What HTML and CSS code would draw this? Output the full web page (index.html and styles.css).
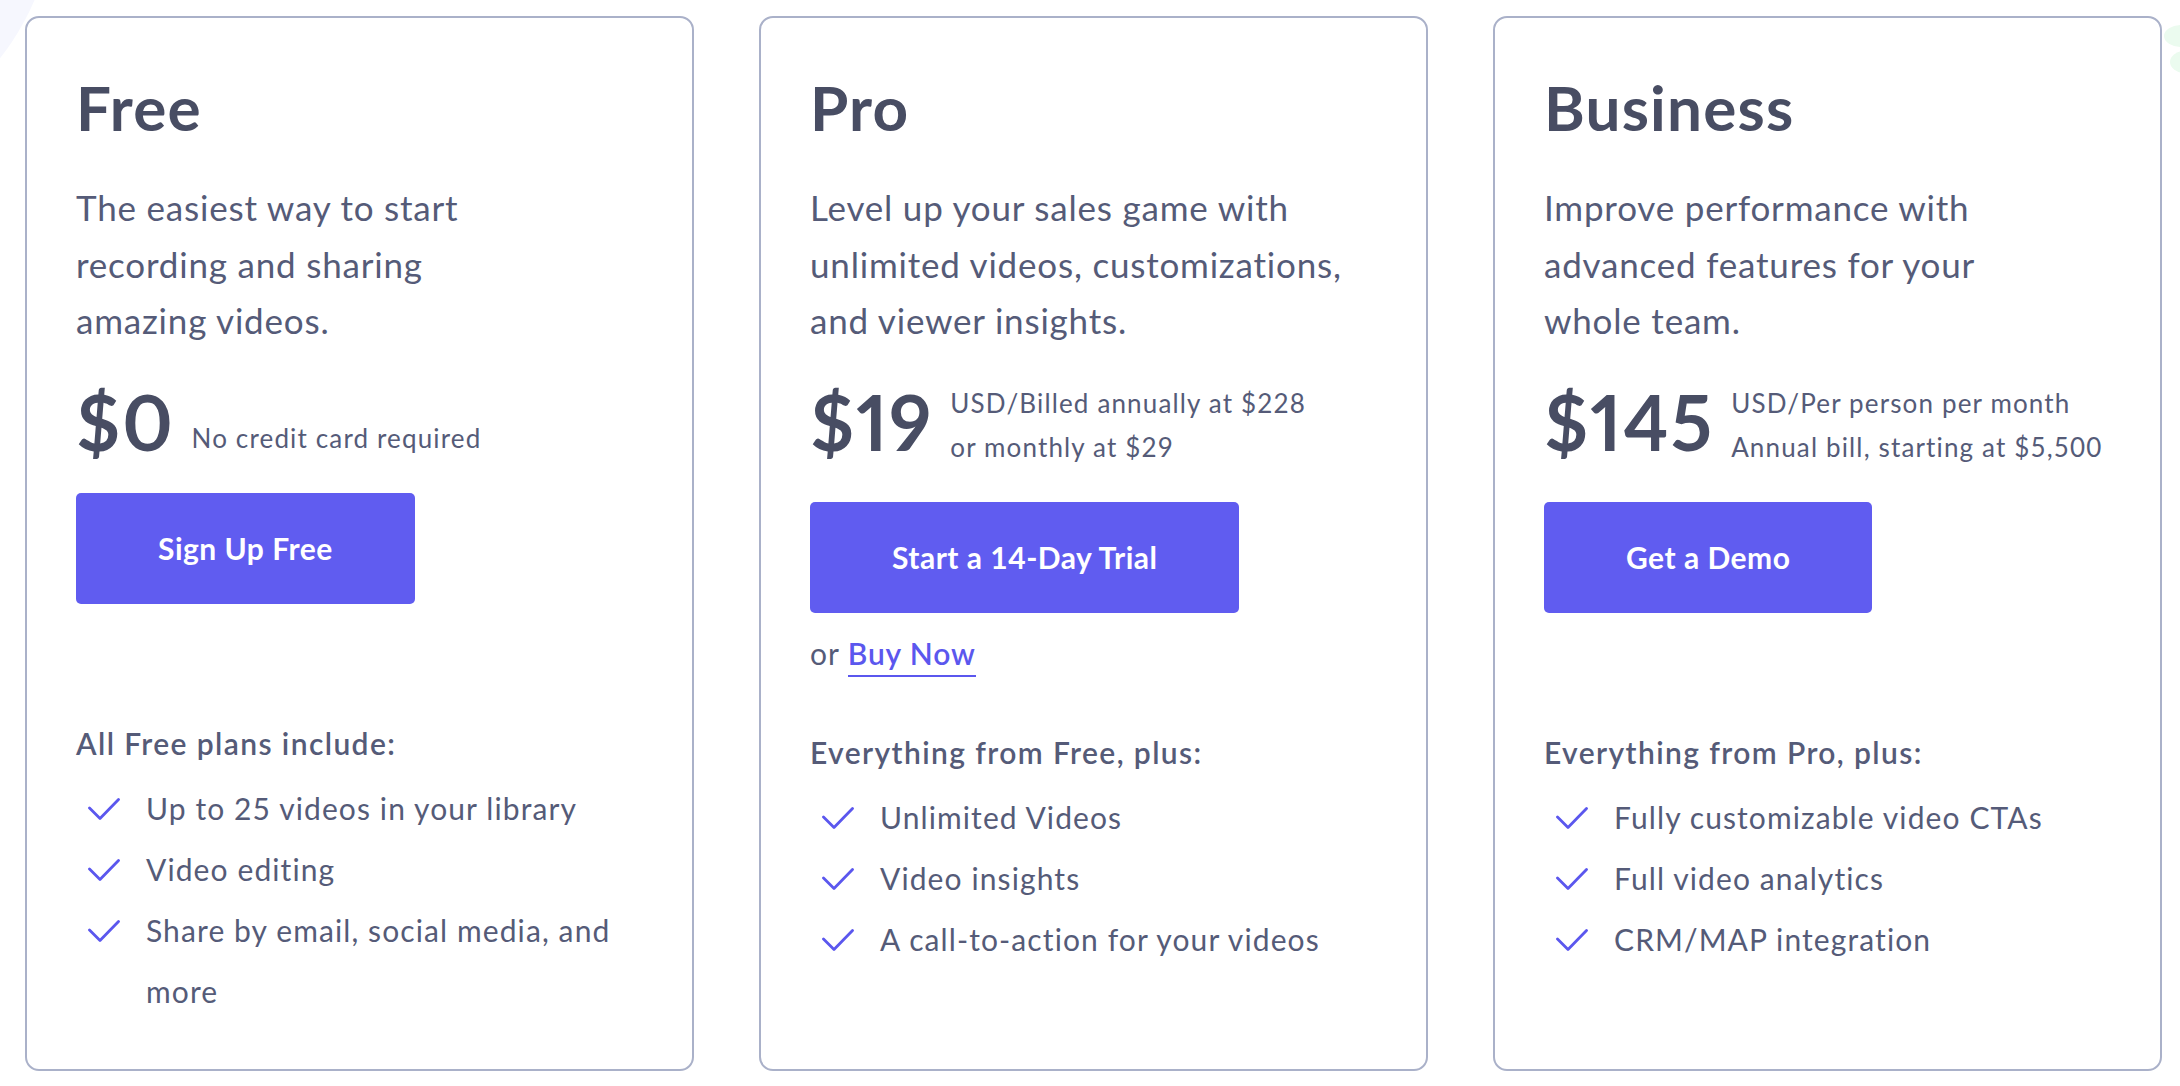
FILE: index.html
```html
<!DOCTYPE html>
<html lang="en">
<head>
<meta charset="utf-8">
<title>Pricing</title>
<link rel="stylesheet" href="styles.css">
</head>
<body>
<div class="deco deco--lavender"></div>
<div class="deco deco--mint-a"></div>
<div class="deco deco--mint-b"></div>
<main class="plans">
  <section class="plan">
    <h2 class="plan__name">Free</h2>
    <p class="plan__desc">The easiest way to start<br>recording and sharing<br>amazing videos.</p>
    <div class="plan__price">
      <span class="plan__amount">$0</span>
      <span class="plan__note plan__note--single">No credit card required</span>
    </div>
    <a class="plan__cta" href="#">Sign Up Free</a>
    <div class="plan__alt"></div>
    <h3 class="plan__includes">All Free plans include:</h3>
    <ul class="plan__features">
      <li class="feature"><svg class="feature__check" viewBox="0 0 32 22"><polyline points="1.5,10 12,20.5 30.5,1.5"/></svg><span class="feature__text">Up to 25 videos in your library</span></li>
      <li class="feature"><svg class="feature__check" viewBox="0 0 32 22"><polyline points="1.5,10 12,20.5 30.5,1.5"/></svg><span class="feature__text">Video editing</span></li>
      <li class="feature"><svg class="feature__check" viewBox="0 0 32 22"><polyline points="1.5,10 12,20.5 30.5,1.5"/></svg><span class="feature__text">Share by email, social media, and more</span></li>
    </ul>
  </section>

  <section class="plan">
    <h2 class="plan__name">Pro</h2>
    <p class="plan__desc">Level up your sales game with<br>unlimited videos, customizations,<br>and viewer insights.</p>
    <div class="plan__price">
      <span class="plan__amount">$19</span>
      <span class="plan__note">USD/Billed annually at $228<br>or monthly at $29</span>
    </div>
    <a class="plan__cta" href="#">Start a 14-Day Trial</a>
    <p class="plan__alt">or <a class="plan__link" href="#">Buy Now</a></p>
    <h3 class="plan__includes">Everything from Free, plus:</h3>
    <ul class="plan__features">
      <li class="feature"><svg class="feature__check" viewBox="0 0 32 22"><polyline points="1.5,10 12,20.5 30.5,1.5"/></svg><span class="feature__text">Unlimited Videos</span></li>
      <li class="feature"><svg class="feature__check" viewBox="0 0 32 22"><polyline points="1.5,10 12,20.5 30.5,1.5"/></svg><span class="feature__text">Video insights</span></li>
      <li class="feature"><svg class="feature__check" viewBox="0 0 32 22"><polyline points="1.5,10 12,20.5 30.5,1.5"/></svg><span class="feature__text">A call-to-action for your videos</span></li>
    </ul>
  </section>

  <section class="plan">
    <h2 class="plan__name">Business</h2>
    <p class="plan__desc">Improve performance with<br>advanced features for your<br>whole team.</p>
    <div class="plan__price">
      <span class="plan__amount">$145</span>
      <span class="plan__note">USD/Per person per month<br>Annual bill, starting at $5,500</span>
    </div>
    <a class="plan__cta" href="#">Get a Demo</a>
    <div class="plan__alt"></div>
    <h3 class="plan__includes">Everything from Pro, plus:</h3>
    <ul class="plan__features">
      <li class="feature"><svg class="feature__check" viewBox="0 0 32 22"><polyline points="1.5,10 12,20.5 30.5,1.5"/></svg><span class="feature__text">Fully customizable video CTAs</span></li>
      <li class="feature"><svg class="feature__check" viewBox="0 0 32 22"><polyline points="1.5,10 12,20.5 30.5,1.5"/></svg><span class="feature__text">Full video analytics</span></li>
      <li class="feature"><svg class="feature__check" viewBox="0 0 32 22"><polyline points="1.5,10 12,20.5 30.5,1.5"/></svg><span class="feature__text">CRM/MAP integration</span></li>
    </ul>
  </section>
</main>
</body>
</html>
```

FILE: styles.css
```css
* { box-sizing: border-box; }

html, body {
  margin: 0;
  padding: 0;
  background: #ffffff;
}

body {
  position: relative;
  width: 2180px;
  height: 1086px;
  overflow: hidden;
  font-family: "Lato", "Noto Sans", sans-serif;
  color: #555b78;
}

.deco {
  position: absolute;
  border-radius: 50%;
  z-index: 0;
}
.deco--lavender {
  left: -455px;
  top: -355px;
  width: 510px;
  height: 510px;
  background: #f6f7fe;
}
.deco--mint-a {
  left: 2164px;
  top: 25px;
  width: 34px;
  height: 22px;
  background: #ebfbef;
}
.deco--mint-b {
  left: 2170px;
  top: 51px;
  width: 30px;
  height: 22px;
  background: #ebfbef;
}

.plans {
  position: relative;
  z-index: 1;
  display: flex;
  gap: 65px;
  padding: 16px 0 0 25px;
}

.plan {
  width: 669px;
  height: 1055px;
  border: 2px solid #aab1c9;
  border-radius: 14px;
  background: #ffffff;
  padding: 52px 48px 0 49px;
  display: flex;
  flex-direction: column;
  align-items: flex-start;
}

.plan__name {
  margin: 0;
  font-size: 62px;
  line-height: 74px;
  font-weight: 700;
  letter-spacing: 1.2px;
  color: #484d63;
}

.plan__desc {
  margin: 35px 0 0;
  font-size: 35px;
  line-height: 56.5px;
  font-weight: 400;
  letter-spacing: 0.8px;
}

.plan__price {
  margin-top: 32px;
  display: flex;
  align-items: flex-start;
  gap: 17px;
}

.plan__amount {
  margin-top: 3px;
  font-size: 76px;
  line-height: 76px;
  font-weight: 700;
  font-variant-numeric: proportional-nums;
  letter-spacing: 1.8px;
  color: #484d63;
}

.plan__note {
  font-size: 26px;
  line-height: 44px;
  letter-spacing: 1.15px;
}
.plan__note--single {
  margin-top: 35px;
}

.plan__cta {
  margin-top: 33px;
  display: block;
  padding: 40px 82px;
  font-size: 30px;
  line-height: 31px;
  font-weight: 700;
  letter-spacing: 0.5px;
  color: #ffffff;
  background: #605cf0;
  border-radius: 5px;
  text-decoration: none;
}

.plan__alt {
  margin: 18px 0 0;
  height: 44px;
  font-size: 30px;
  line-height: 44px;
  letter-spacing: 0.9px;
}

.plan__link {
  color: #5b57ee;
  font-weight: 600;
  text-decoration: none;
  border-bottom: 2px solid #5b57ee;
  padding-bottom: 4px;
}

.plan__includes {
  margin: 59px 0 0;
  font-size: 30px;
  line-height: 36px;
  font-weight: 600;
  letter-spacing: 1.4px;
}

.plan__features {
  list-style: none;
  margin: 17px 0 0;
  padding: 0;
}

.feature {
  display: flex;
  align-items: flex-start;
  font-size: 30px;
  line-height: 61px;
  letter-spacing: 1.1px;
}

.feature__check {
  flex: none;
  width: 32px;
  height: 22px;
  margin: 20px 26px 0 12px;
  fill: none;
  stroke: #5b57ee;
  stroke-width: 2.8;
  stroke-linecap: round;
  stroke-linejoin: round;
}

.feature__text {
  max-width: 496px;
}
```
